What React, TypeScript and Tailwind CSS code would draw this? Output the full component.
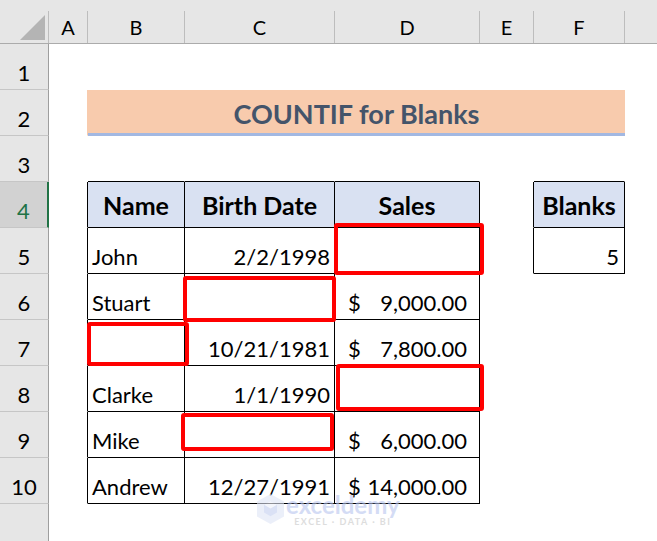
import React from "react";

const FONT = "font-['Lato','Liberation_Sans',sans-serif]";

type Row = {
  name: string;
  date: string;
  sales: string;
};

const rows: Row[] = [
  { name: "John", date: "2/2/1998", sales: "" },
  { name: "Stuart", date: "", sales: "9,000.00" },
  { name: "", date: "10/21/1981", sales: "7,800.00" },
  { name: "Clarke", date: "1/1/1990", sales: "" },
  { name: "Mike", date: "", sales: "6,000.00" },
  { name: "Andrew", date: "12/27/1991", sales: "14,000.00" },
];

function ColHeader({ letter }: { letter: string }) {
  return (
    <div className="flex bg-[#e6e6e6] border-b border-[#ababab]">
      <div className="flex-1 flex items-end justify-center pb-[6px] text-[20px] leading-none text-black">
        {letter}
      </div>
      <div className="w-px self-end h-[32px] bg-[#bdbdbd]" />
    </div>
  );
}

function RowHeader({ n, active }: { n?: number; active?: boolean }) {
  return (
    <div
      className={
        active
          ? "flex items-end justify-center pb-[5px] bg-[#d2d2d2] border-r-2 border-r-[#217346] border-b border-b-[#c6c6c6] text-[22px] leading-none text-[#217346]"
          : "flex items-end justify-center pb-[5px] bg-[#e6e6e6] border-r border-r-[#9e9e9e] border-b border-b-[#c6c6c6] text-[22px] leading-none text-black"
      }
    >
      {n}
    </div>
  );
}

function Blank({ cls = "" }: { cls?: string }) {
  return <div className={"border-r border-b border-white " + cls} />;
}

function RedBox({ cls }: { cls: string }) {
  return (
    <div
      className={
        "absolute border-4 border-[#ff0000] rounded-[3px] pointer-events-none " + cls
      }
    />
  );
}

export default function App() {
  return (
    <div className={`relative w-[657px] h-[541px] overflow-hidden bg-white ${FONT}`}>
      <div className="grid h-full grid-cols-[49px_39px_97px_150px_145px_54px_91px_1fr] grid-rows-[44px_repeat(10,46px)_1fr]">
        {/* column headers */}
        <div className="flex bg-[#e6e6e6] border-b border-[#ababab]">
          <div className="flex-1 flex items-start pt-[15px] pl-[20px]">
            <svg width="26" height="26" viewBox="0 0 26 26">
              <polygon points="25,0 25,25 0,25" fill="#b4b4b4" />
            </svg>
          </div>
          <div className="w-px self-end h-[32px] bg-[#bdbdbd]" />
        </div>
        {["A", "B", "C", "D", "E", "F"].map((c) => (
          <ColHeader key={c} letter={c} />
        ))}
        <div className="bg-[#e6e6e6] border-b border-[#ababab]" />

        {/* row 1 */}
        <RowHeader n={1} />
        <Blank />
        <Blank />
        <Blank />
        <Blank />
        <Blank />
        <Blank />
        <Blank />

        {/* row 2 - title */}
        <RowHeader n={2} />
        <div className="border-r border-r-[#f8cbad] border-b border-b-white" />
        <div className="col-span-5 flex items-end justify-center pb-[6px] bg-[#f8cbad] border-b-[3px] border-[#a2b8e2] text-[27px] leading-none font-bold text-[#44546a]">
          COUNTIF for Blanks
        </div>
        <Blank />

        {/* row 3 */}
        <RowHeader n={3} />
        <Blank />
        <div className="border-r border-r-white border-b border-b-black" />
        <div className="border-r border-r-white border-b border-b-black" />
        <div className="border-r border-r-white border-b border-b-black" />
        <Blank />
        <div className="border-r border-r-white border-b border-b-black" />
        <Blank />

        {/* row 4 - table headers */}
        <RowHeader n={4} active />
        <div className="border-r border-r-black border-b border-b-white" />
        <div className="flex items-center justify-center pt-[2px] bg-[#d9e1f2] border-r border-b border-black text-[25px] leading-none font-bold text-black">
          Name
        </div>
        <div className="flex items-center justify-center pt-[2px] bg-[#d9e1f2] border-r border-b border-black text-[25px] leading-none font-bold text-black">
          Birth Date
        </div>
        <div className="flex items-center justify-center pt-[2px] bg-[#d9e1f2] border-r border-b border-black text-[25px] leading-none font-bold text-black">
          Sales
        </div>
        <div className="border-r border-r-black border-b border-b-white" />
        <div className="flex items-center justify-center pt-[2px] bg-[#d9e1f2] border-r border-b border-black text-[25px] leading-none font-bold text-black">
          Blanks
        </div>
        <Blank />

        {/* data rows 5-10 */}
        {rows.map((r, i) => (
          <React.Fragment key={i}>
            <RowHeader n={i + 5} />
            <div className="border-r border-r-black border-b border-b-white" />
            <div className="flex items-end pl-[4px] pb-[5px] border-r border-b border-black text-[22px] leading-none text-black">
              {r.name}
            </div>
            <div className="flex items-end justify-end pr-[4px] pb-[5px] border-r border-b border-black text-[22px] leading-none text-black">
              {r.date}
            </div>
            <div className="flex items-end justify-between pl-[13px] pr-[12px] pb-[5px] border-r border-b border-black text-[22px] leading-none text-black">
              {r.sales && (
                <>
                  <span>$</span>
                  <span>{r.sales}</span>
                </>
              )}
            </div>
            {i === 0 ? (
              <>
                <div className="border-r border-r-black border-b border-b-white" />
                <div className="flex items-end justify-end pr-[5px] pb-[5px] border-r border-b border-black text-[22px] leading-none text-black">
                  5
                </div>
              </>
            ) : (
              <>
                <Blank />
                <Blank />
              </>
            )}
            <Blank />
          </React.Fragment>
        ))}

        {/* row 11 (partial) */}
        <div className="bg-[#e6e6e6] border-r border-r-[#9e9e9e]" />
        <div className="col-span-7" />
      </div>

      {/* highlighted blanks */}
      <RedBox cls="left-[334px] top-[223px] w-[150px] h-[52px]" />
      <RedBox cls="left-[183px] top-[276px] w-[153px] h-[46px]" />
      <RedBox cls="left-[87px] top-[322px] w-[102px] h-[44px]" />
      <RedBox cls="left-[336px] top-[364px] w-[148px] h-[47px]" />
      <RedBox cls="left-[181px] top-[413px] w-[153px] h-[38px]" />

      {/* watermark */}
      <div className="absolute left-[257px] top-[494px] flex items-start gap-[2px] opacity-60 pointer-events-none">
        <svg width="27" height="30" viewBox="0 0 27 30">
          <polygon points="13.5,0 27,7.5 27,22.5 13.5,30 0,22.5 0,7.5" fill="#dfe5f6" />
          <polygon points="13.5,7 20,10.8 20,18.5 13.5,22.3 7,18.5 7,10.8" fill="#c3cef0" />
          <polygon points="13.5,7 20,10.8 13.5,14.6 7,10.8" fill="#eef1fb" />
        </svg>
        <div className="flex flex-col items-center">
          <span className="text-[24px] leading-[22px] font-bold text-[#b9c6ef]">
            exceldemy
          </span>
          <span className="text-[9px] leading-none font-bold text-[#c8c8c8] tracking-[1.5px] mt-[1px]">
            EXCEL · DATA · BI
          </span>
        </div>
      </div>
    </div>
  );
}
